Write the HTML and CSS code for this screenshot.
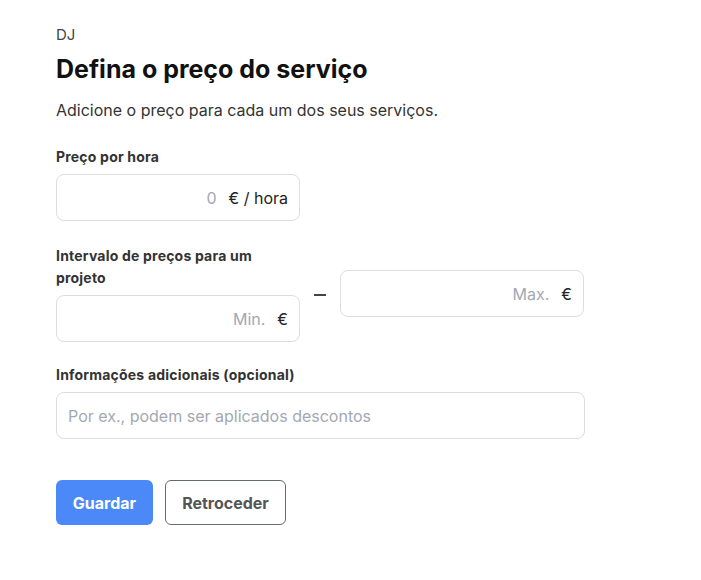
FILE: index.html
```html
<!DOCTYPE html>
<html lang="pt">
<head>
    <meta charset="UTF-8">
    <meta name="viewport" content="width=device-width, initial-scale=1.0">
    <title>Defina o preço do serviço</title>
    <link rel="stylesheet" href="styles.css">
</head>
<body>
    <div class="page">
        <div class="category">DJ</div>
        <h1>Defina o preço do serviço</h1>
        <p class="intro">Adicione o preço para cada um dos seus serviços.</p>

        <div class="form-group">
            <label for="hourly">Preço por hora</label>
            <div class="field half">
                <input type="text" id="hourly" placeholder="0">
                <span class="suffix">€ / hora</span>
            </div>
        </div>

        <div class="range-row">
            <div class="range-col">
                <label for="min" class="range-label">Intervalo de preços para um projeto</label>
                <div class="field">
                    <input type="text" id="min" placeholder="Min.">
                    <span class="suffix">€</span>
                </div>
            </div>
            <span class="dash"></span>
            <div class="range-col">
                <div class="field">
                    <input type="text" id="max" placeholder="Max.">
                    <span class="suffix">€</span>
                </div>
            </div>
        </div>

        <div class="form-group info-group">
            <label for="info">Informações adicionais (opcional)</label>
            <div class="field">
                <input type="text" id="info" class="left" placeholder="Por ex., podem ser aplicados descontos">
            </div>
        </div>

        <div class="actions">
            <button class="btn primary">Guardar</button>
            <button class="btn secondary">Retroceder</button>
        </div>
    </div>
</body>
</html>
```
FILE: styles.css
```css
body {
    margin: 0;
    font-family: 'Inter', 'Open Sans', sans-serif;
    color: #222;
    background: #fff;
}
.page {
    width: 529px;
    padding: 26px 56px;
}
.category {
    font-size: 15px;
    color: #444;
    line-height: 18px;
}
h1 {
    margin: 10px 0 0;
    font-size: 25px;
    line-height: 30px;
    font-weight: 700;
    color: #111;
}
.intro {
    margin: 16px 0 0;
    font-size: 16px;
    line-height: 20px;
    color: #333;
}
.form-group {
    margin-top: 26px;
}
.info-group {
    margin-top: 22px;
}
label {
    display: block;
    font-size: 14px;
    font-weight: 700;
    line-height: 22px;
    letter-spacing: 0.2px;
    color: #333;
    margin-bottom: 6px;
}
.field {
    display: flex;
    align-items: center;
    height: 47px;
    box-sizing: border-box;
    border: 1px solid #ddd;
    border-radius: 8px;
    padding: 0 11px;
    background: #fff;
}
.field.half {
    width: 244px;
}
.field input {
    flex: 1;
    min-width: 0;
    border: none;
    outline: none;
    background: transparent;
    font-family: inherit;
    font-size: 16px;
    color: #333;
    text-align: right;
    padding: 0;
}
.field input.left {
    text-align: left;
}
.field input::placeholder {
    color: #a3a8b3;
}
.suffix {
    margin-left: 12px;
    font-size: 16px;
    color: #222;
}
.range-row {
    display: flex;
    align-items: center;
    gap: 14px;
    margin-top: 24px;
}
.range-label {
    max-width: 215px;
}
.range-col {
    width: 244px;
}
.dash {
    width: 12px;
    height: 2px;
    background: #444;
    margin-top: 2px;
}
.actions {
    display: flex;
    gap: 12px;
    margin-top: 41px;
}
.btn {
    height: 45px;
    border-radius: 6px;
    font-family: inherit;
    font-size: 16px;
    font-weight: 700;
    cursor: pointer;
}
.primary {
    background: #4c89f8;
    color: #fff;
    border: none;
    width: 97px;
}
.secondary {
    background: #fff;
    color: #555;
    border: 1px solid #666b73;
    width: 121px;
}
```
